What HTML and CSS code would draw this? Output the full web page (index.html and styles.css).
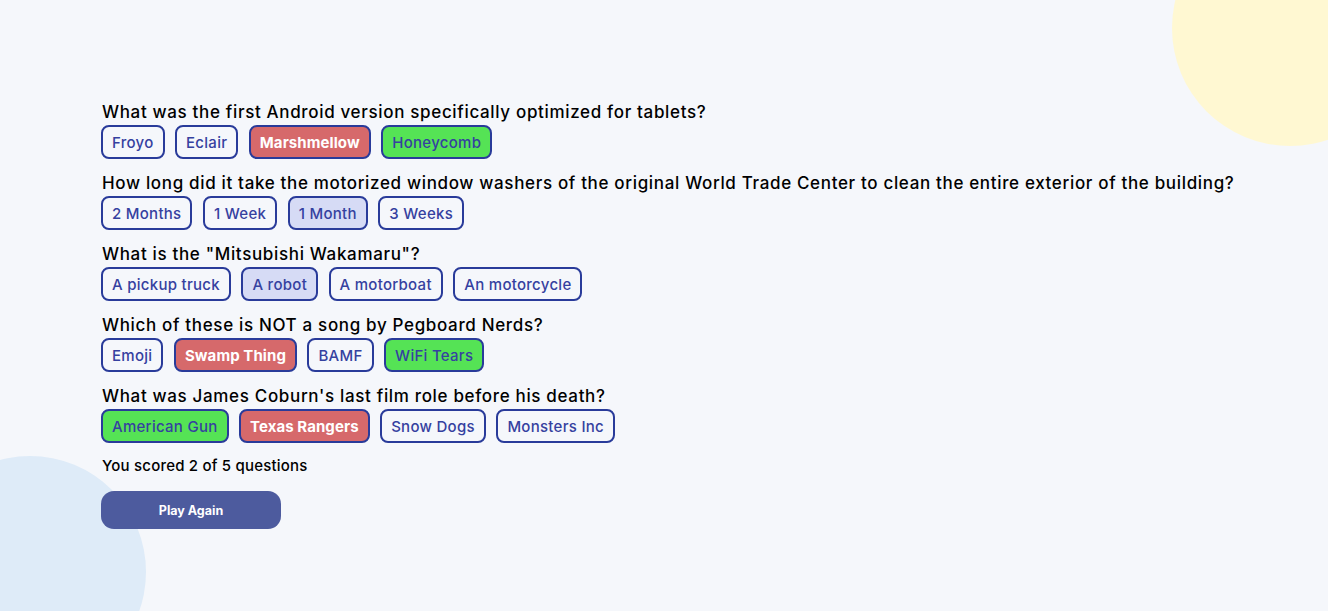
FILE: index.html
```html
<!DOCTYPE html>
<html>
<head>
<meta charset="utf-8">
<link rel="stylesheet" href="styles.css">
</head>
<body>
<div class="page">
<div class="blob blob-yellow"></div>
<div class="blob blob-blue"></div>
<main class="quiz">
  <section class="question">
    <h2 class="q-text">What was the first Android version specifically optimized for tablets?</h2>
    <div class="answers">
      <button class="ans">Froyo</button>
      <button class="ans">Eclair</button>
      <button class="ans wrong">Marshmellow</button>
      <button class="ans correct">Honeycomb</button>
    </div>
  </section>
  <section class="question">
    <h2 class="q-text">How long did it take the motorized window washers of the original World Trade Center to clean the entire exterior of the building?</h2>
    <div class="answers">
      <button class="ans">2 Months</button>
      <button class="ans">1 Week</button>
      <button class="ans held">1 Month</button>
      <button class="ans">3 Weeks</button>
    </div>
  </section>
  <section class="question">
    <h2 class="q-text">What is the "Mitsubishi Wakamaru"?</h2>
    <div class="answers">
      <button class="ans">A pickup truck</button>
      <button class="ans held">A robot</button>
      <button class="ans">A motorboat</button>
      <button class="ans">An motorcycle</button>
    </div>
  </section>
  <section class="question">
    <h2 class="q-text">Which of these is NOT a song by Pegboard Nerds?</h2>
    <div class="answers">
      <button class="ans">Emoji</button>
      <button class="ans wrong">Swamp Thing</button>
      <button class="ans">BAMF</button>
      <button class="ans correct">WiFi Tears</button>
    </div>
  </section>
  <section class="question">
    <h2 class="q-text">What was James Coburn's last film role before his death?</h2>
    <div class="answers">
      <button class="ans correct">American Gun</button>
      <button class="ans wrong">Texas Rangers</button>
      <button class="ans">Snow Dogs</button>
      <button class="ans">Monsters Inc</button>
    </div>
  </section>
  <p class="score">You scored 2 of 5 questions</p>
  <button class="play">Play Again</button>
</main>
</div>
</body>
</html>
```
FILE: styles.css
```css
html, body {
  margin: 0;
  padding: 0;
  overflow: hidden;
}
body {
  background: #f5f7fb;
  font-family: "Inter", "Noto Sans", sans-serif;
  color: #000;
}
.page {
  position: relative;
  height: 611px;
  overflow: hidden;
}
.blob {
  position: absolute;
  border-radius: 50%;
  z-index: 0;
}
.blob-yellow {
  width: 236px;
  height: 236px;
  left: 1172px;
  top: -90px;
  background: #fff8d2;
}
.blob-blue {
  width: 232px;
  height: 232px;
  left: -86px;
  top: 456px;
  background: #deebf8;
}
.quiz {
  position: relative;
  z-index: 1;
  padding: 102px 0 0 101px;
  display: flex;
  flex-direction: column;
  align-items: flex-start;
}
.question {
  margin-bottom: 14px;
}
.q-text {
  margin: 0;
  font-size: 17px;
  line-height: 20px;
  font-weight: 500;
  letter-spacing: 0.66px;
  padding-left: 1px;
}
.answers {
  display: flex;
  gap: 10.5px;
  margin-top: 3px;
}
.ans {
  font-family: inherit;
  font-size: 15px;
  line-height: 18px;
  font-weight: 500;
  letter-spacing: 0.28px;
  color: #3541a0;
  background: transparent;
  border: 2px solid #293b9a;
  border-radius: 8px;
  padding: 7px 9px 5px;
  height: 34px;
}
.ans.wrong {
  background: #d6696b;
  color: #fff;
  font-weight: 700;
  letter-spacing: 0.08px;
}
.ans.correct {
  background: #55e355;
}
.ans.held {
  background: #d6dbf5;
}
.score {
  margin: 0;
  font-size: 15px;
  line-height: 18px;
  font-weight: 500;
  letter-spacing: 0.2px;
  padding-left: 1px;
}
.play {
  margin-top: 16px;
  width: 180px;
  height: 38px;
  border: none;
  border-radius: 13px;
  background: #4d5b9e;
  color: #fff;
  font-family: inherit;
  font-size: 12.5px;
  font-weight: 700;
}
```
